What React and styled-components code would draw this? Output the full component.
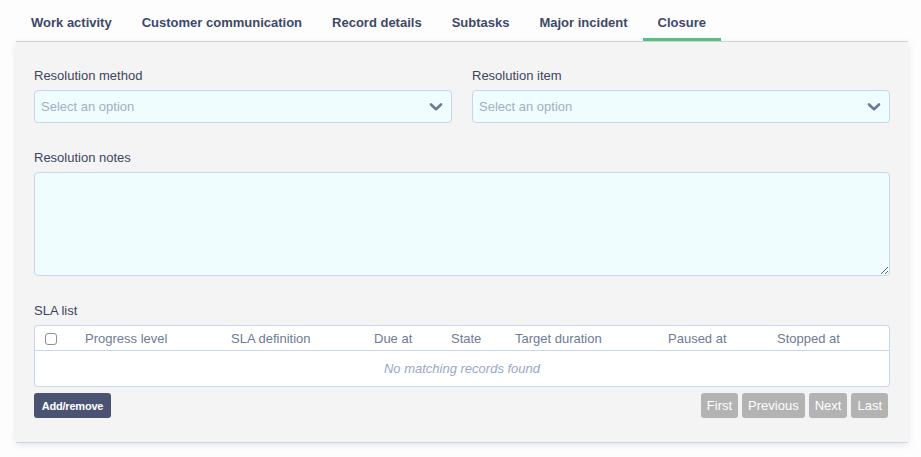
import React from "react";
import styled, { createGlobalStyle } from "styled-components";

const Global = createGlobalStyle`
  html, body { margin: 0; padding: 0; background: #fdfdfd; }
  body { font-family: "Liberation Sans", Arial, Helvetica, sans-serif; -webkit-font-smoothing: antialiased; }
  * { box-sizing: border-box; }
`;

const Page = styled.div`
  width: 921px;
  padding: 0 13px 14px 16px;
`;

const TabBar = styled.div`
  display: flex;
  height: 41px;
`;

const Tab = styled.div`
  display: flex;
  align-items: center;
  padding: 6px 15px 0;
  border-bottom: 3px solid ${(p) => (p.$active ? "#55c17a" : "transparent")};
  font-size: 13px;
  font-weight: 700;
  color: #3e4868;
  white-space: nowrap;
`;

const Panel = styled.div`
  background: #f4f4f4;
  border-top: 1px solid #cdd4df;
  border-bottom: 1px solid #c9d6ee;
  box-shadow: 0 2px 7px rgba(0, 0, 0, 0.1);
  padding: 25px 18px 24px;
  display: flex;
  flex-direction: column;
`;

const Row = styled.div`
  display: grid;
  grid-template-columns: 1fr 1fr;
  column-gap: 20px;
`;

const Field = styled.div`
  display: flex;
  flex-direction: column;
  margin-bottom: ${(p) => p.$mb || 0}px;
`;

const Label = styled.div`
  font-size: 13px;
  line-height: 16px;
  padding-top: 1px;
  color: #3c4560;
  margin-bottom: 6px;
`;

const Select = styled.div`
  height: 33px;
  background: #effdff;
  border: 1px solid #c6d6ef;
  border-radius: 4px;
  display: flex;
  align-items: center;
  justify-content: space-between;
  padding: 0 8px 0 6px;
  font-size: 13px;
  color: #a3aec8;
`;

const Chevron = () => (
  <svg width="14" height="10" viewBox="0 0 14 10">
    <path d="M2 2.5 L7 7.2 L12 2.5" fill="none" stroke="#6e7892" strokeWidth="2.6" strokeLinecap="round" strokeLinejoin="round" />
  </svg>
);

const TextArea = styled.textarea`
  display: block;
  width: 100%;
  height: 104px;
  background: #effdff;
  border: 1px solid #c6d6ef;
  border-radius: 4px;
  resize: vertical;
  font-family: inherit;
  font-size: 13px;
  outline: none;
`;

const Table = styled.div`
  background: #fff;
  border: 1px solid #c8d6ee;
  border-radius: 4px;
`;

const HeadRow = styled.div`
  display: grid;
  grid-template-columns: 40px 146px 143px 77px 64px 153px 109px 1fr;
  align-items: center;
  height: 25px;
  padding-left: 10px;
  border-bottom: 1px solid #c8d6ee;
  font-size: 13px;
  color: #6f7a94;
`;

const Check = styled.span`
  display: block;
  width: 12px;
  height: 12px;
  border: 1px solid #8f8f8f;
  border-radius: 3px;
  background: #fff;
  margin-top: 2px;
`;

const Empty = styled.div`
  height: 35px;
  display: flex;
  align-items: center;
  justify-content: center;
  font-size: 13px;
  font-style: italic;
  color: #9ba7c3;
`;

const Footer = styled.div`
  display: flex;
  justify-content: space-between;
  margin-top: 6px;
  padding-right: 2px;
`;

const PrimaryButton = styled.button`
  height: 25px;
  width: 77px;
  padding: 0;
  border: none;
  border-radius: 3px;
  background: #4a5472;
  color: #fff;
  font-family: inherit;
  font-size: 11px;
  font-weight: 700;
  letter-spacing: -0.2px;
`;

const Pager = styled.div`
  display: flex;
  gap: 4px;
`;

const PageButton = styled.button`
  height: 25px;
  padding: 0 6px;
  border: none;
  border-radius: 3px;
  background: #b3b3b3;
  color: #fff;
  font-family: inherit;
  font-size: 13px;
`;

const tabs = ["Work activity", "Customer communication", "Record details", "Subtasks", "Major incident", "Closure"];
const cols = ["Progress level", "SLA definition", "Due at", "State", "Target duration", "Paused at", "Stopped at"];

export default function App() {
  return (
    <Page>
      <Global />
      <TabBar>
        {tabs.map((t) => (
          <Tab key={t} $active={t === "Closure"}>{t}</Tab>
        ))}
      </TabBar>
      <Panel>
        <Row>
          <Field $mb={26}>
            <Label>Resolution method</Label>
            <Select>
              <span>Select an option</span>
              <Chevron />
            </Select>
          </Field>
          <Field $mb={26}>
            <Label>Resolution item</Label>
            <Select>
              <span>Select an option</span>
              <Chevron />
            </Select>
          </Field>
        </Row>
        <Field $mb={26}>
          <Label>Resolution notes</Label>
          <TextArea />
        </Field>
        <Field>
          <Label>SLA list</Label>
          <Table>
            <HeadRow>
              <Check />
              {cols.map((c) => (
                <span key={c}>{c}</span>
              ))}
            </HeadRow>
            <Empty>No matching records found</Empty>
          </Table>
        </Field>
        <Footer>
          <PrimaryButton>Add/remove</PrimaryButton>
          <Pager>
            <PageButton>First</PageButton>
            <PageButton>Previous</PageButton>
            <PageButton>Next</PageButton>
            <PageButton>Last</PageButton>
          </Pager>
        </Footer>
      </Panel>
    </Page>
  );
}
